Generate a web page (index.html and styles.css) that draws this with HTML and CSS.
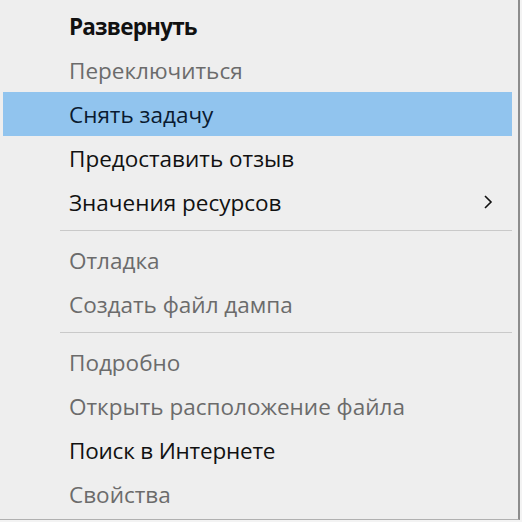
FILE: index.html
```html
<!DOCTYPE html>
<html lang="ru">
<head>
<meta charset="utf-8">
<link rel="stylesheet" href="styles.css">
</head>
<body>
<div class="menu">
  <div class="item bold">Развернуть</div>
  <div class="item gray">Переключиться</div>
  <div class="item hl">Снять задачу</div>
  <div class="item">Предоставить отзыв</div>
  <div class="item sub">Значения ресурсов<svg class="chev" width="12" height="16" viewBox="0 0 12 16"><path d="M3 2 L9 8 L3 14" fill="none" stroke="#111" stroke-width="1.6"/></svg></div>
  <div class="sep"></div>
  <div class="item gray">Отладка</div>
  <div class="item gray">Создать файл дампа</div>
  <div class="sep"></div>
  <div class="item gray">Подробно</div>
  <div class="item gray">Открыть расположение файла</div>
  <div class="item semi">Поиск в Интернете</div>
  <div class="item gray">Свойства</div>
</div>
</body>
</html>
```
FILE: styles.css
```css
html, body {
  margin: 0;
  padding: 0;
  background: #f3f3f3;
}
.menu {
  width: 515px;
  height: 515px;
  padding: 4px 0 0 3px;
  background: #eeeeee;
  border-right: 2px solid #8c8c8c;
  border-bottom: 1px solid #b0b0b0;
  font-family: "Open Sans", "Noto Sans", sans-serif;
  font-size: 22.5px;
  color: #111;
  display: flex;
  flex-direction: column;
}
.item {
  height: 44px;
  width: 509px;
  display: flex;
  align-items: center;
  padding-left: 66px;
  box-sizing: border-box;
}
.bold { font-weight: 700; letter-spacing: -0.8px; }
.semi { font-weight: 500; letter-spacing: -0.2px; }
.gray { color: #6b6b6b; }
.hl { background: #91c4ee; color: #0a1a30; }
.sub { justify-content: space-between; padding-right: 18px; }
.chev { display: block; }
.sep {
  height: 1px;
  background: #c9c9c9;
  margin: 6px 0 7px 57px;
  width: 452px;
}
```
